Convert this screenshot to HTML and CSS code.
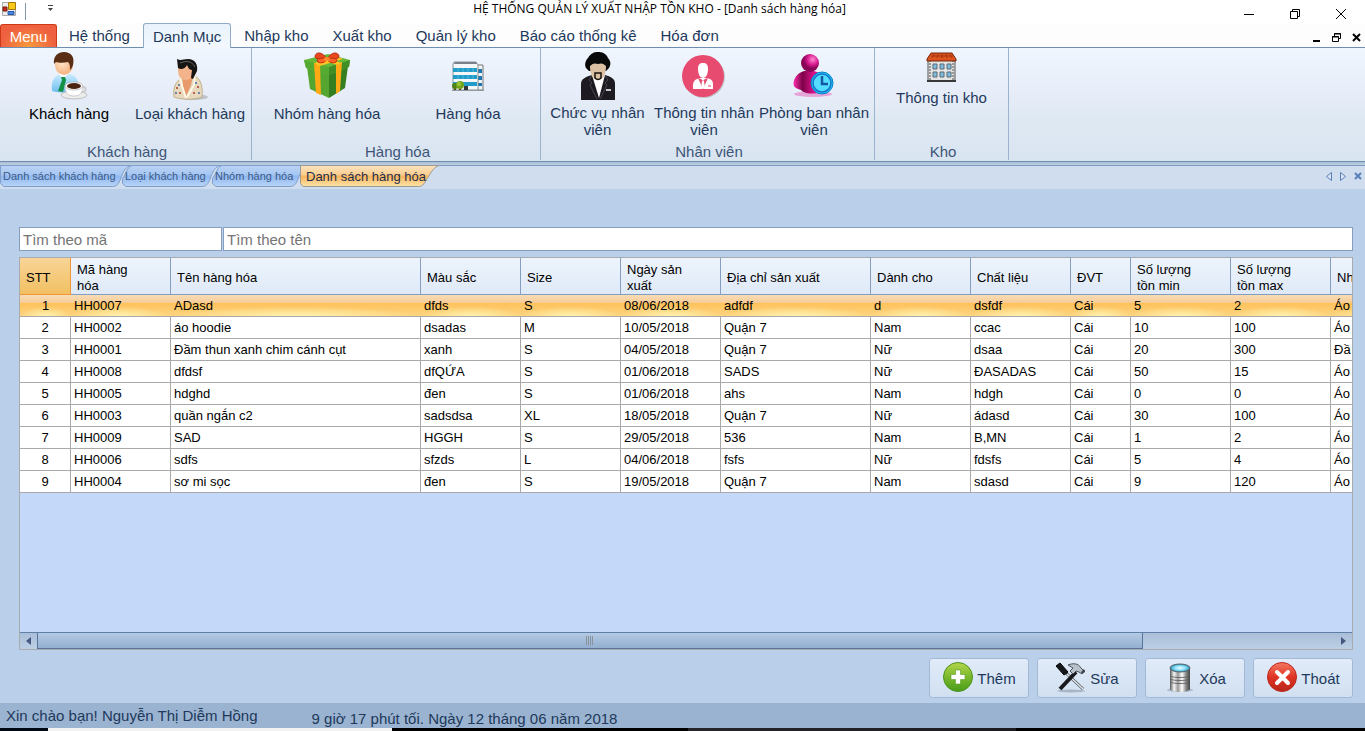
FILE: index.html
```html
<!DOCTYPE html>
<html lang="vi">

<head>
  <meta charset="UTF-8">
  <meta name="viewport" content="width=device-width, initial-scale=1.0">
  <title>Hệ thống quản lý xuất nhập tồn kho</title>

  <link rel="stylesheet" href="styles.css">
</head>

<body>
  <header class="titlebar">
    <div class="quick">
      <svg width="14" height="14" viewBox="0 0 14 14">
        <path d="M.5.5h13v13H.5z" fill="#eee" stroke="#aaa"/>
        <path d="M6.500.5h7v7h-7z" fill="#f8c818" stroke="#a07a10"/>
        <path d="M1 5h4v4H1z" fill="#c02a18" stroke="#7a1a10"/>
        <path d="M6 9.500h6v3H6z" fill="#4a86e0" stroke="#2a5ab0"/>
      </svg>
      <span class="quick-line"></span>
      <svg width="7" height="7" viewBox="0 0 7 7"><path d="M1 .5h5" stroke="#444"/><path d="M1 3h5L3.500 6z" fill="#444"/></svg>
    </div>
    <div class="caption">HỆ THỐNG QUẢN LÝ XUẤT NHẬP TỒN KHO - [Danh sách hàng hóa]</div>
    <div class="window-buttons">
      <button type="button" aria-label="Thu nhỏ"><svg width="10" height="10" viewBox="0 0 10 10"><path d="M0 5.500h10" stroke="#000"/></svg></button>
      <button type="button" aria-label="Khôi phục"><svg width="10" height="10" viewBox="0 0 10 10"><path d="M.5 2.500h7v7h-7zM2.500 2.500v-2h7v7h-2" fill="none" stroke="#000"/></svg></button>
      <button type="button" aria-label="Đóng"><svg width="10" height="10" viewBox="0 0 10 10"><path d="M0 0l10 10M10 0L0 10" stroke="#000"/></svg></button>
    </div>
  </header>

  <nav class="menu">
    <button type="button" class="menu-main">Menu</button>
    <button type="button" class="menu-tab">Hệ thống</button>
    <button type="button" class="menu-tab active">Danh Mục</button>
    <button type="button" class="menu-tab">Nhập kho</button>
    <button type="button" class="menu-tab">Xuất kho</button>
    <button type="button" class="menu-tab">Quản lý kho</button>
    <button type="button" class="menu-tab">Báo cáo thống kê</button>
    <button type="button" class="menu-tab">Hóa đơn</button>
    <div class="mdi-buttons">
      <button type="button" aria-label="Thu nhỏ cửa sổ con"><svg width="9" height="9" viewBox="0 0 9 9"><path d="M1 8h7" stroke="#000" stroke-width="2"/></svg></button>
      <button type="button" aria-label="Khôi phục cửa sổ con"><svg width="9" height="9" viewBox="0 0 9 9"><path d="M.5 3.500h6v5h-6zM0 4h7M2.500 3V.5h6v5H7M2 1h7" fill="none" stroke="#000"/></svg></button>
      <button type="button" aria-label="Đóng cửa sổ con"><svg width="9" height="9" viewBox="0 0 9 9"><path d="M1 1l7 7M8 1L1 8" stroke="#000" stroke-width="2"/></svg></button>
    </div>
  </nav>

  <section class="ribbon">
    <div class="group group-customer">
      <div class="group-items">
        <button type="button" class="item current">
          <svg width="48" height="48" viewBox="0 0 48 48">
            <defs>
              <radialGradient id="skin" cx=".4" cy=".4"><stop offset="0" stop-color="#ffe4c8"/><stop offset="1" stop-color="#f5b98a"/></radialGradient>
              <linearGradient id="shirt" x2="0" y2="1"><stop offset="0" stop-color="#c8ecff"/><stop offset="1" stop-color="#6fbdee"/></linearGradient>
            </defs>
            <path d="M7 39c-1-9 1-15 9-17h8c7 1 10 6 10 17-8 2-20 2-27 0z" fill="url(#shirt)"/>
            <path d="M14 22l4 5 5-5-2-3h-6z" fill="#fff"/>
            <path d="M16 25h4l1 3-3 12-5-1 4-11z" fill="#129044"/>
            <ellipse cx="19" cy="13" rx="9" ry="10" fill="url(#skin)"/>
            <path d="M9 12C8 4 13 0 19 0c7 0 11 5 9 13-1 3-2 4-3 5 0-4 0-6-2-8-4 1-9 1-12 0z" fill="#5a2e14"/>
            <ellipse cx="29" cy="43" rx="13" ry="4" fill="#ececec" stroke="#aaa" stroke-width=".7"/>
            <path d="M20 34c0 7 3 10 9 10s9-3 9-10z" fill="#fff" stroke="#bbb" stroke-width=".7"/>
            <path d="M37 35c5-1 5 6-1 5" fill="none" stroke="#ccc" stroke-width="2"/>
            <ellipse cx="29" cy="34" rx="9" ry="4" fill="#fff" stroke="#aaa" stroke-width=".7"/>
            <ellipse cx="29" cy="34" rx="7" ry="3" fill="#4a2412"/>
          </svg>
          <span>Khách hàng</span>
        </button>
        <button type="button" class="item">
          <svg width="48" height="48" viewBox="0 0 48 48">
            <ellipse cx="28" cy="45" rx="14" ry="3" fill="#999" opacity=".5"/>
            <path d="M8 45c-1-9 1-14 6-18l4-3h11c6 3 8 11 7 21-7 3-21 3-28 0z" fill="#e6d9bd" stroke="#b59c70" stroke-width=".7"/>
            <path d="M16 24h11l-2 9-5 12-3-11z" fill="#e89a6c"/>
            <path d="M14 26l2 8 4 12M29 21l-1 12-7 12" fill="none" stroke="#fff8e6" stroke-width="2"/>
            <g fill="#b23a35"><circle cx="11" cy="36" r="1"/><circle cx="14" cy="41" r="1"/><circle cx="28" cy="41" r="1"/><circle cx="32" cy="35" r="1"/></g>
            <g fill="#4868a8"><circle cx="10" cy="41" r="1"/><circle cx="13" cy="33" r="1"/><circle cx="33" cy="41" r="1"/><circle cx="30" cy="31" r="1"/></g>
            <path d="M12 17c0 7 2 11 8 11 5 0 8-4 8-11l-3-5H13z" fill="#f3b38b"/>
            <path d="M11 7c4 2 6 0 11 0 7 0 10 5 9 12l-4 8-2-1 1-8c-3 0-4-3-5-5-2 4-6 5-9 3z" fill="#171414"/>
            <path d="M14 11c6-2 11-3 15 4" fill="none" stroke="#666"/>
          </svg>
          <span>Loại khách hàng</span>
        </button>
      </div>
      <div class="group-name">Khách hàng</div>
    </div>

    <div class="group group-goods">
      <div class="group-items">
        <button type="button" class="item">
          <svg width="48" height="48" viewBox="0 0 48 48">
            <path d="M4 15l22 7v24L7 37z" fill="#54a630"/>
            <path d="M26 22l19-8-3 22-16 10z" fill="#357f20"/>
            <path d="M1 8L25 2l22 6-1 7-20 8-23-7z" fill="#65b93a"/>
            <path d="M26 15l21-7-1 7-20 8z" fill="#418e26"/>
            <path d="M1 8l25 7v8L3 16z" fill="#55aa32"/>
            <path d="M11 11l6 2 1 30-5-2zM33 13l6-3-2 29-4 3z" fill="#ffaa14"/>
            <path d="M11 11L35 5l5 2-23 7zM11 5l4-1 24 7-5 2z" fill="#ffc324"/>
            <path d="M24 7C19-1 13 0 12 4c0 3 6 5 12 3zM24 7c5-8 11-7 12-3 0 3-6 5-12 3z" fill="#e9491d" stroke="#b92d12"/>
            <path d="M24 7C18 5 12 7 15 10c3 2 8 0 9-3 6-2 12 0 9 3-3 2-8 0-9-3z" fill="#ff6426" stroke="#b92d12"/>
            <ellipse cx="24" cy="7" rx="3" ry="2" fill="#ff8a2e"/>
          </svg>
          <span>Nhóm hàng hóa</span>
        </button>
        <button type="button" class="item">
          <svg width="48" height="48" viewBox="0 0 48 48">
            <path d="M33 13h6v25h-6z" fill="#eef2f4" stroke="#777"/>
            <path d="M34 17h4v4h-4zM34 24h4v4h-4zM34 31h4v3h-4z" fill="#1c77b2"/>
            <path d="M10 10h22l2 3v25H9V12z" fill="#f4f6f8" stroke="#8a9299"/>
            <path d="M11 10h21l1 2H10z" fill="#79828a"/>
            <path d="M9 16h24v4H9zM9 23h24v4H9zM9 30h24v4H9z" fill="#229cc9"/>
            <path d="M14 16v4M19 16v4M24 16v4M29 16v4M14 23v4M19 23v4M24 23v4M29 23v4" stroke="#4db6da"/>
            <path d="M20 34h4v4h-4z" fill="#30363c"/>
            <path d="M8 38.500h32" stroke="#929a9c"/>
            <path d="M11 34v4M16 34v4" stroke="#6a3e1a" stroke-width="2"/>
            <circle cx="11" cy="34" r="3" fill="#4d8416"/><circle cx="16" cy="33" r="4" fill="#71a51e"/><circle cx="15" cy="32" r="2" fill="#a0c63a"/>
          </svg>
          <span>Hàng hóa</span>
        </button>
      </div>
      <div class="group-name">Hàng hóa</div>
    </div>

    <div class="group group-staff">
      <div class="group-items">
        <button type="button" class="item">
          <svg width="48" height="48" viewBox="0 0 48 48">
            <path d="M7 48V32c0-5 4-7 11-9h13c7 2 10 4 10 9v16z" fill="#1d1b21"/>
            <path d="M18 23h13l-6 23z" fill="#fff"/>
            <path d="M18 23l-3 5 3 3-2 2 7 14M31 23l3 5-3 3 2 2-7 14" fill="none" stroke="#494650"/>
            <path d="M32 38h5" stroke="#fff" stroke-width="1.500"/>
            <path d="M12 16c-2-4 0-8 2-10 3-5 6-6 10-6s8 1 10 6c3 3 3 7 1 10l-3 3H15z" fill="#09090a"/>
            <path d="M16 14c3-3 5-3 8-2 3-1 5-1 8 2 0 7-2 14-8 14s-8-7-8-14z" fill="#dcc0a2"/>
            <path d="M21 21h6v5c-2 2-4 2-6 0z" fill="none" stroke="#17110e" stroke-width="1.500"/>
          </svg>
          <span>Chức vụ nhân<br>viên</span>
        </button>
        <button type="button" class="item">
          <svg width="48" height="48" viewBox="0 0 48 48">
            <circle cx="24" cy="25" r="21" fill="#aaa" opacity=".6"/>
            <circle cx="23" cy="24" r="21" fill="#e74b70"/>
            <path d="M18 17c0-5 2-6 5-6s5 1 5 6-2 9-5 9-5-4-5-9z" fill="#fff"/>
            <path d="M13 37c0-7 0-9 7-11h7c7 2 6 4 6 11z" fill="#fff"/>
            <path d="M18 26l5 11 5-11-3 1-2 2-2-2z" fill="#e74b70"/>
            <path d="M22 29h2l1 7h-4z" fill="#fff"/>
            <path d="M28 34h3" stroke="#e74b70"/>
          </svg>
          <span>Thông tin nhân<br>viên</span>
        </button>
        <button type="button" class="item">
          <svg width="48" height="48" viewBox="0 0 48 48">
            <defs>
              <radialGradient id="pinkHead" cx=".65" cy=".3"><stop offset="0" stop-color="#ff8ad2"/><stop offset=".6" stop-color="#d81b90"/><stop offset="1" stop-color="#8a0557"/></radialGradient>
              <linearGradient id="pinkBody"><stop offset="0" stop-color="#ff2dac"/><stop offset=".3" stop-color="#7c0349"/><stop offset=".7" stop-color="#e0128f"/><stop offset="1" stop-color="#a8076a"/></linearGradient>
            </defs>
            <ellipse cx="23" cy="42" rx="19" ry="3" fill="#e53aa5" opacity=".4"/>
            <path d="M4 34c-2-6 3-13 10-15h10c8 2 10 8 9 20-8 4-19 3-22-1-2-1-5-1-7-4z" fill="url(#pinkBody)"/>
            <circle cx="20" cy="11" r="9" fill="url(#pinkHead)"/>
            <circle cx="32" cy="31" r="11" fill="#22c8f8" stroke="#087fc9"/>
            <circle cx="32" cy="31" r="9" fill="#54ddff" stroke="#1675c8" stroke-width="1.500"/>
            <path d="M32 24v8h6" fill="none" stroke="#1356a3" stroke-width="2.500"/>
          </svg>
          <span>Phòng ban nhân<br>viên</span>
        </button>
      </div>
      <div class="group-name">Nhân viên</div>
    </div>

    <div class="group group-store">
      <div class="group-items">
        <button type="button" class="item">
          <svg width="32" height="32" viewBox="0 0 32 32">
            <path d="M2 7h27v22H2z" fill="#e4e4e4" stroke="#555"/>
            <path d="M4 8v20M27 8v20" stroke="#999" stroke-width="2" stroke-dasharray="2 1"/>
            <path d="M5 1h21l4 6v2H1V7z" fill="#dd531e" stroke="#72260c"/>
            <path d="M8 2L6 6M12 2l-1 4M16 2v4M20 2l1 4M24 2l2 4M5 4h22" stroke="#a53610"/>
            <path d="M7 12h4v5H7zM14 12h4v5h-4zM21 12h4v5h-4zM7 20h4v5H7zM14 20h4v5h-4zM21 20h4v5h-4z" fill="#7dbcdf" stroke="#5c6a74"/>
            <path d="M1 28h29v2H1z" fill="#383838"/>
          </svg>
          <span>Thông tin kho</span>
        </button>
      </div>
      <div class="group-name">Kho</div>
    </div>
  </section>

  <nav class="doc-tabs">
    <button type="button" class="doc-tab">
      <svg width="132" height="22" viewBox="0 0 132 22">
        <defs><linearGradient id="blueTab" x2="0" y2="1"><stop offset="0" stop-color="#bcd3f3"/><stop offset=".45" stop-color="#a5c6f3"/><stop offset=".5" stop-color="#8fb8f0"/><stop offset="1" stop-color="#b9d4f8"/></linearGradient></defs>
        <path d="M.5.5h131c-6 1-8 6-10 11-2 6-4 10-9 10H4l-3.500-3z" fill="url(#blueTab)" stroke="#7f9fca"/>
      </svg>
      <span>Danh sách khách hàng</span>
    </button>
    <button type="button" class="doc-tab">
      <svg width="100" height="22" viewBox="0 0 100 22">
        <path d="M10 .5h89c-6 1-8 6-10 11-2 6-4 10-9 10H4l-3.500-3v-5C4 9 5 2 10 .5z" fill="url(#blueTab)" stroke="#7f9fca"/>
      </svg>
      <span>Loại khách hàng</span>
    </button>
    <button type="button" class="doc-tab">
      <svg width="98" height="22" viewBox="0 0 98 22">
        <path d="M10 .5h87c-6 1-8 6-10 11-2 6-4 10-9 10H4l-3.500-3v-5C4 9 5 2 10 .5z" fill="url(#blueTab)" stroke="#7f9fca"/>
      </svg>
      <span>Nhóm hàng hóa</span>
    </button>
    <button type="button" class="doc-tab active">
      <svg width="140" height="22" viewBox="0 0 140 22">
        <defs><linearGradient id="orangeTab" x2="0" y2="1"><stop offset="0" stop-color="#fbe3c0"/><stop offset=".45" stop-color="#fbcd8e"/><stop offset=".5" stop-color="#f9b45c"/><stop offset="1" stop-color="#fde3a8"/></linearGradient></defs>
        <path d="M.5.5h139c-5 1-8 6-11 11-4 6-5 10-10 10H3l-2.500-3z" fill="url(#orangeTab)" stroke="#9a9a94"/>
      </svg>
      <span>Danh sách hàng hóa</span>
    </button>
    <div class="doc-nav">
      <button type="button" aria-label="Thẻ trước"><svg width="6" height="9" viewBox="0 0 6 9"><path d="M5.500.5v8l-5-4z" fill="#dbe6f5" stroke="#5a7fb8"/></svg></button>
      <button type="button" aria-label="Thẻ sau"><svg width="6" height="9" viewBox="0 0 6 9"><path d="M.5.5v8l5-4z" fill="#dbe6f5" stroke="#5a7fb8"/></svg></button>
      <button type="button" aria-label="Đóng thẻ"><svg width="8" height="8" viewBox="0 0 8 8"><path d="M1 1l6 6M7 1L1 7" stroke="#5a7fb8" stroke-width="2"/></svg></button>
    </div>
  </nav>

  <main>
    <div class="search">
      <input type="text" class="search-code" placeholder="Tìm theo mã" aria-label="Tìm theo mã">
      <input type="text" class="search-name" placeholder="Tìm theo tên" aria-label="Tìm theo tên">
    </div>

    <div class="grid">
      <div class="grid-view">
        <table>
          <colgroup>
            <col class="w-no"><col class="w-100"><col class="w-250"><col class="w-100"><col class="w-100"><col class="w-100"><col class="w-150"><col class="w-100"><col class="w-100"><col class="w-60"><col class="w-100"><col class="w-100"><col class="w-100">
          </colgroup>
          <thead>
            <tr><th>STT</th><th>Mã hàng<br>hóa</th><th>Tên hàng hóa</th><th>Màu sắc</th><th>Size</th><th>Ngày sản<br>xuất</th><th>Địa chỉ sản xuất</th><th>Dành cho</th><th>Chất liệu</th><th>ĐVT</th><th>Số lượng<br>tồn min</th><th>Số lượng<br>tồn max</th><th>Nh</th></tr>
          </thead>
          <tbody>
            <tr class="selected"><td>1</td><td>HH0007</td><td>ADasd</td><td>dfds</td><td>S</td><td>08/06/2018</td><td>adfdf</td><td>d</td><td>dsfdf</td><td>Cái</td><td>5</td><td>2</td><td>Áo</td></tr>
            <tr><td>2</td><td>HH0002</td><td>áo hoodie</td><td>dsadas</td><td>M</td><td>10/05/2018</td><td>Quận 7</td><td>Nam</td><td>ccac</td><td>Cái</td><td>10</td><td>100</td><td>Áo</td></tr>
            <tr><td>3</td><td>HH0001</td><td>Đầm thun xanh chim cánh cụt</td><td>xanh</td><td>S</td><td>04/05/2018</td><td>Quận 7</td><td>Nữ</td><td>dsaa</td><td>Cái</td><td>20</td><td>300</td><td>Đầ</td></tr>
            <tr><td>4</td><td>HH0008</td><td>dfdsf</td><td>dfQỨA</td><td>S</td><td>01/06/2018</td><td>SADS</td><td>Nữ</td><td>ĐASADAS</td><td>Cái</td><td>50</td><td>15</td><td>Áo</td></tr>
            <tr><td>5</td><td>HH0005</td><td>hdghd</td><td>đen</td><td>S</td><td>01/06/2018</td><td>ahs</td><td>Nam</td><td>hdgh</td><td>Cái</td><td>0</td><td>0</td><td>Áo</td></tr>
            <tr><td>6</td><td>HH0003</td><td>quần ngắn c2</td><td>sadsdsa</td><td>XL</td><td>18/05/2018</td><td>Quận 7</td><td>Nữ</td><td>ádasd</td><td>Cái</td><td>30</td><td>100</td><td>Áo</td></tr>
            <tr><td>7</td><td>HH0009</td><td>SAD</td><td>HGGH</td><td>S</td><td>29/05/2018</td><td>536</td><td>Nam</td><td>B,MN</td><td>Cái</td><td>1</td><td>2</td><td>Áo</td></tr>
            <tr><td>8</td><td>HH0006</td><td>sdfs</td><td>sfzds</td><td>L</td><td>04/06/2018</td><td>fsfs</td><td>Nữ</td><td>fdsfs</td><td>Cái</td><td>5</td><td>4</td><td>Áo</td></tr>
            <tr><td>9</td><td>HH0004</td><td>sơ mi sọc</td><td>đen</td><td>S</td><td>19/05/2018</td><td>Quận 7</td><td>Nam</td><td>sdasd</td><td>Cái</td><td>9</td><td>120</td><td>Áo</td></tr>
          </tbody>
        </table>
      </div>
      <div class="scrollbar">
        <button type="button" aria-label="Cuộn trái"><svg width="5" height="8" viewBox="0 0 5 8"><path d="M5 0v8L0 4z" fill="#46567e"/></svg></button>
        <div class="track">
          <div class="thumb"><svg width="8" height="9" viewBox="0 0 8 9"><path d="M.5 0v9M2.500 0v9M4.500 0v9M6.500 0v9" stroke="#8a929c"/></svg></div>
        </div>
        <button type="button" aria-label="Cuộn phải"><svg width="5" height="8" viewBox="0 0 5 8"><path d="M0 0v8l5-4z" fill="#46567e"/></svg></button>
      </div>
    </div>

    <div class="actions">
      <button type="button">
        <svg width="32" height="32" viewBox="0 0 32 32">
          <defs><linearGradient id="green" x2="0" y2="1"><stop offset="0" stop-color="#b4d64c"/><stop offset=".5" stop-color="#7ab82c"/><stop offset="1" stop-color="#4a9c1a"/></linearGradient></defs>
          <circle cx="16" cy="15" r="14.500" fill="url(#green)" stroke="#4e941c"/>
          <path d="M13.500 8h5v4.500H23v5h-4.500V22h-5v-4.500H9v-5h4.500z" fill="#fff" stroke="#5d9d25" stroke-width=".6"/>
        </svg>
        Thêm
      </button>
      <button type="button">
        <svg width="32" height="32" viewBox="0 0 32 32">
          <ellipse cx="16" cy="29" rx="14" ry="1.500" fill="#8c98a8" opacity=".6"/>
          <path d="M11 11l17 16" stroke="#555e66" stroke-width="3"/>
          <path d="M12 12l16 15" stroke="#dfe5ea" stroke-width="1.500"/>
          <path d="M1 4l4-3 8 9-4 3z" fill="#15181b" stroke="#000"/>
          <path d="M21 10L5 27" stroke="#17191c" stroke-width="4"/>
          <path d="M13 3c5-2 10-2 13 3l2 2 2 1-3 3-3-2-3-1-3 3-3-3 3-3z" fill="#b8c1c9" stroke="#4a535b"/>
          <path d="M26 10l3-3 1 3-3 2z" fill="#3f474e"/>
        </svg>
        Sửa
      </button>
      <button type="button">
        <svg width="32" height="32" viewBox="0 0 32 32">
          <defs>
            <linearGradient id="metal"><stop offset="0" stop-color="#555"/><stop offset=".2" stop-color="#f6f6f6"/><stop offset=".4" stop-color="#999"/><stop offset=".6" stop-color="#fff"/><stop offset=".8" stop-color="#888"/><stop offset="1" stop-color="#444"/></linearGradient>
            <radialGradient id="glow"><stop offset="0" stop-color="#f0feff"/><stop offset=".6" stop-color="#7fdcf5"/><stop offset="1" stop-color="#2b88ae"/></radialGradient>
          </defs>
          <ellipse cx="16" cy="28" rx="13" ry="2" fill="#71859a" opacity=".4"/>
          <path d="M6 6v21c1 4 19 4 20 0V6z" fill="url(#metal)"/>
          <path d="M6 14c3 2 17 2 20 0M6 17c3 2 17 2 20 0M6 20c3 2 17 2 20 0" fill="none" stroke="#555" stroke-width=".8"/>
          <ellipse cx="16" cy="6" rx="10" ry="4" fill="url(#glow)" stroke="#55656d"/>
        </svg>
        Xóa
      </button>
      <button type="button">
        <svg width="32" height="32" viewBox="0 0 32 32">
          <defs><linearGradient id="red" x2="0" y2="1"><stop offset="0" stop-color="#f47a64"/><stop offset=".5" stop-color="#e03324"/><stop offset="1" stop-color="#b8261a"/></linearGradient></defs>
          <circle cx="16" cy="15" r="14.500" fill="url(#red)" stroke="#bd261c"/>
          <path d="M11 10l11 11M22 10L11 21" stroke="#fff" stroke-width="4" stroke-linecap="round"/>
        </svg>
        Thoát
      </button>
    </div>
  </main>

  <footer class="status">
    <span class="hello">Xin chào bạn! Nguyễn Thị Diễm Hồng</span>
    <span class="clock">9 giờ 17 phút tối. Ngày 12 tháng 06 năm 2018</span>
  </footer>
  <div class="taskbar"></div>
</body>

</html>
```
FILE: styles.css
```css
* {
  box-sizing: border-box;
}

body {
  margin: 0;
  min-height: 100vh;
  display: flex;
  flex-direction: column;
  overflow: hidden;
  background-color: #bad0ea;
  color: #1e395b;
  font-family: "Liberation Sans", Arial, sans-serif;
  font-size: 15px;
}

button {
  font: inherit;
  color: inherit;
  padding: 0;
  border: none;
  background: none;
}

svg {
  display: block;
  flex: none;
}

/* title bar */
.titlebar {
  display: grid;
  grid-template-columns: 1fr auto 1fr;
  height: 23px;
  background-color: #fff;
}

.quick {
  display: flex;
  padding: 2px;
}

.quick-line {
  width: 1px;
  height: 17px;
  margin: 1px 21px 0 9px;
  background-color: #8496ad;
}

.quick svg:last-child {
  margin-top: 3px;
}

.caption {
  padding-right: 46px;
  color: #000;
  font-family: "Open Sans", "Noto Sans", sans-serif;
  font-size: 12px;
  line-height: 18px;
}

.window-buttons {
  display: flex;
  justify-content: flex-end;
  gap: 36px;
  padding: 9px 19px 0 0;
}

.window-buttons button {
  height: 10px;
}

/* menu row */
.menu {
  display: flex;
  height: 25px;
  background-color: #fdfdfe;
  border-bottom: 1px solid #6f8dae;
}

.menu-main {
  width: 57px;
  margin-top: 1px;
  border: 1px solid #cf3a16;
  border-bottom: none;
  border-radius: 3px 3px 0 0;
  color: #fff;
  background: radial-gradient(ellipse at 50% 100%, #f99a3c, transparent 70%), #ee6040;
}

.menu-tab {
  height: 25px;
  padding: 0 12px;
}

.menu-tab.active {
  padding: 0 9px;
  margin: 0 1px;
  border: 1px solid #8fabc9;
  border-bottom: none;
  border-radius: 3px 3px 0 0;
  background: linear-gradient(#e9f2fb, #f2f8fe);
}

.mdi-buttons {
  display: flex;
  gap: 11px;
  margin-left: auto;
  padding: 10px 4px 0 0;
}

.mdi-buttons button {
  height: 9px;
}

/* ribbon */
.ribbon {
  display: flex;
  height: 114px;
  background: linear-gradient(#eff6fe, #e5ecf8 45%, #dfe9f4 60%, #d8e4f0);
  border-bottom: 1px solid #6f8dae;
}

.group {
  display: flex;
  flex-direction: column;
  margin-bottom: 1px;
  border-right: 1px solid #9cb3cf;
}

.group-items {
  flex: 1;
  display: grid;
}

.item {
  display: flex;
  flex-direction: column;
  align-items: center;
  gap: 5px;
  padding-top: 4px;
  line-height: 17px;
  white-space: nowrap;
}

.item.current {
  color: #000;
}

.group-name {
  padding-left: 3px;
  color: #3e5578;
  line-height: 17px;
  text-align: center;
}

.group-customer {
  width: 252px;
}

.group-customer .group-items {
  grid-template-columns: 122px 120px;
  padding-left: 8px;
}

.group-goods {
  width: 289px;
}

.group-goods .group-items {
  grid-template-columns: 150px 132px;
}

.group-staff {
  width: 334px;
}

.group-staff .item {
  gap: 4px;
}

.group-staff .group-items {
  grid-template-columns: 113px 100px 120px;
}

.group-store {
  width: 134px;
}

/* open document tabs */
.doc-tabs {
  display: flex;
  height: 28px;
  padding-top: 3px;
  background: linear-gradient(#a9bdd3, #c0d0e3 3px, #7d9cc2 3px, #7d9cc2 4px, #cfddee 4px);
  border-bottom: 1px solid #b9d0e8;
}

.doc-tab {
  display: grid;
  align-items: center;
  height: 22px;
  margin-right: -10px;
  color: #3b5a86;
  font-size: 11px;
  text-align: left;
}

.doc-tab svg,
.doc-tab span {
  grid-area: 1 / 1;
}

.doc-tab span {
  padding-left: 3px;
}

.doc-tab.active {
  color: #1e2f4b;
  font-size: 13px;
}

.doc-tab.active span {
  padding-left: 6px;
}

.doc-nav {
  display: flex;
  align-items: center;
  gap: 8px;
  margin-left: auto;
  padding: 0 3px 2px 0;
}

/* content */
main {
  flex: 1;
  display: flex;
  flex-direction: column;
  padding: 37px 12px 5px 19px;
}

.search {
  display: flex;
  gap: 1px;
  margin-bottom: 6px;
}

.search input {
  height: 24px;
  padding: 0 3px;
  border: 1px solid #859ebf;
  background-color: #fff;
  font: inherit;
}

.search input::placeholder {
  color: #757575;
}

.search-code {
  width: 203px;
}

.search-name {
  flex: 1;
}

.grid {
  flex: 1;
  display: flex;
  flex-direction: column;
  border: 1px solid #a9abb0;
  background-color: #c4d9f9;
}

.grid-view {
  flex: 1;
  min-width: 0;
  overflow: hidden;
}

table {
  width: 1411px;
  table-layout: fixed;
  border-spacing: 0;
  color: #000;
  font-size: 13px;
}

.w-no {
  width: 51px;
}

.w-60 {
  width: 60px;
}

.w-100 {
  width: 100px;
}

.w-150 {
  width: 150px;
}

.w-250 {
  width: 250px;
}

th {
  height: 37px;
  padding: 4px 6px 0;
  border-right: 1px solid #859ebf;
  border-bottom: 1px solid #859ebf;
  background: linear-gradient(#edf4fc, #dfe9f7);
  font-weight: normal;
  line-height: 16px;
  text-align: left;
  white-space: nowrap;
}

th:first-child {
  border-color: #f29536;
  background: linear-gradient(#f8d496, #f1c062);
}

td {
  height: 22px;
  padding: 1px 3px 0;
  border-right: 1px solid #a9a9a9;
  border-bottom: 1px solid #a9a9a9;
  background-color: #fff;
  line-height: 20px;
  white-space: nowrap;
}

td:first-child {
  text-align: center;
}

.selected td {
  border-right: none;
  background: radial-gradient(ellipse 50% 45% at 50% 100%, #fff2ae, transparent), linear-gradient(#f8dcb4, #f7cd9c 35%, #fec25c 40%, #fdd480);
}

.scrollbar {
  display: flex;
  height: 17px;
  border-top: 1px solid #5f7fa8;
  background: linear-gradient(#a9bfd8, #bccfe5);
}

.scrollbar button {
  display: flex;
  justify-content: center;
  align-items: center;
  width: 17px;
}

.track {
  flex: 1;
}

.thumb {
  display: flex;
  justify-content: center;
  align-items: center;
  width: calc(85% + 3px);
  height: 16px;
  border: 1px solid #56759c;
  border-top: none;
  background: linear-gradient(#b4cae4, #93afcf);
}

.actions {
  display: flex;
  justify-content: flex-end;
  gap: 8px;
  margin-top: 8px;
}

.actions button {
  display: flex;
  justify-content: center;
  align-items: center;
  gap: 3px;
  width: 100px;
  height: 40px;
  border: 1px solid #a3b9d6;
  border-radius: 3px;
  background: linear-gradient(#e1ebf9, #d1e0f0);
}

/* status bar */
.status {
  display: flex;
  gap: 54px;
  height: 25px;
  padding-left: 6px;
  background-color: #9ab3d0;
  line-height: 25px;
}

.clock {
  padding-top: 3px;
}

.taskbar {
  height: 3px;
  background: linear-gradient(90deg, #000814 48px, #f2f2f2 48px, #f2f2f2 392px, #000 392px, #000 688px, #26262a 688px, #1c1c20 1016px, #000 1016px);
}
```
